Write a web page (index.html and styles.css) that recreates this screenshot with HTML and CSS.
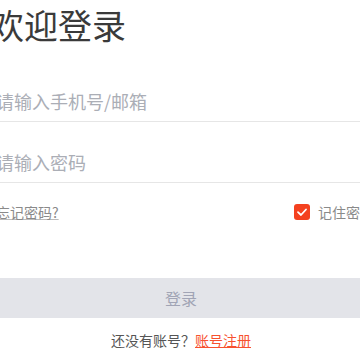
FILE: index.html
```html
<!DOCTYPE html>
<html lang="zh-CN">
<head>
<meta charset="utf-8">
<link rel="stylesheet" href="styles.css">
</head>
<body>
<div class="page">
  <h1 class="title">欢迎登录</h1>
  <div class="field"><input class="input" type="text" placeholder="请输入手机号/邮箱"></div>
  <div class="field field-2"><input class="input" type="password" placeholder="请输入密码"></div>
  <div class="row">
    <a class="forgot">忘记密码?</a>
    <label class="remember">
      <span class="check"><svg viewBox="0 0 16 16" width="16" height="16"><path d="M4 8.2 L7 11 L12 5.5" fill="none" stroke="#fff" stroke-width="1.8" stroke-linecap="round" stroke-linejoin="round"/></svg></span>
      <span class="remember-text">记住密码</span>
    </label>
  </div>
  <button class="btn">登录</button>
  <p class="signup">还没有账号？<a class="signup-link">账号注册</a></p>
</div>
</body>
</html>
```
FILE: styles.css
```css
html, body {
  margin: 0;
  padding: 0;
  background: #fff;
  overflow: hidden;
}
body {
  font-family: "Noto Sans CJK SC", "Noto Sans", sans-serif;
}
.page {
  margin-left: -4px;
  width: 370px;
  display: flex;
  flex-direction: column;
}
.title {
  margin: 0 0 0 -6px;
  font-size: 34px;
  line-height: 50px;
  font-weight: 400;
  color: #3a3a3a;
}
.field {
  margin-top: 31px;
  border-bottom: 1px solid #e6e6e6;
}
.field-2 {
  margin-top: 20px;
}
.input {
  display: block;
  width: 100%;
  box-sizing: border-box;
  height: 40px;
  border: 0;
  outline: none;
  padding: 0;
  font-family: inherit;
  font-size: 18px;
  color: #333;
  background: transparent;
}
.input::placeholder {
  color: #abaeb6;
}
.row {
  margin-top: 19px;
  margin-right: -8px;
  height: 20px;
  display: flex;
  align-items: center;
  justify-content: space-between;
}
.forgot {
  font-size: 14px;
  line-height: 20px;
  color: #8a8a8a;
  text-decoration: underline;
  text-decoration-color: #bbb;
}
.remember {
  display: flex;
  align-items: center;
  gap: 8px;
}
.check {
  width: 16px;
  height: 16px;
  border-radius: 3px;
  background: #f4411f;
  display: flex;
}
.remember-text {
  font-size: 14px;
  line-height: 20px;
  color: #8a8a8a;
}
.btn {
  margin-top: 56px;
  height: 40px;
  border: 0;
  padding: 0;
  background: #e3e4e9;
  color: #a1a4b5;
  font-family: inherit;
  font-size: 16px;
}
.signup {
  margin: 12px 0 0;
  text-align: center;
  font-size: 14px;
  line-height: 20px;
  color: #555;
}
.signup-link {
  color: #f7512f;
  text-decoration: underline;
}
```
